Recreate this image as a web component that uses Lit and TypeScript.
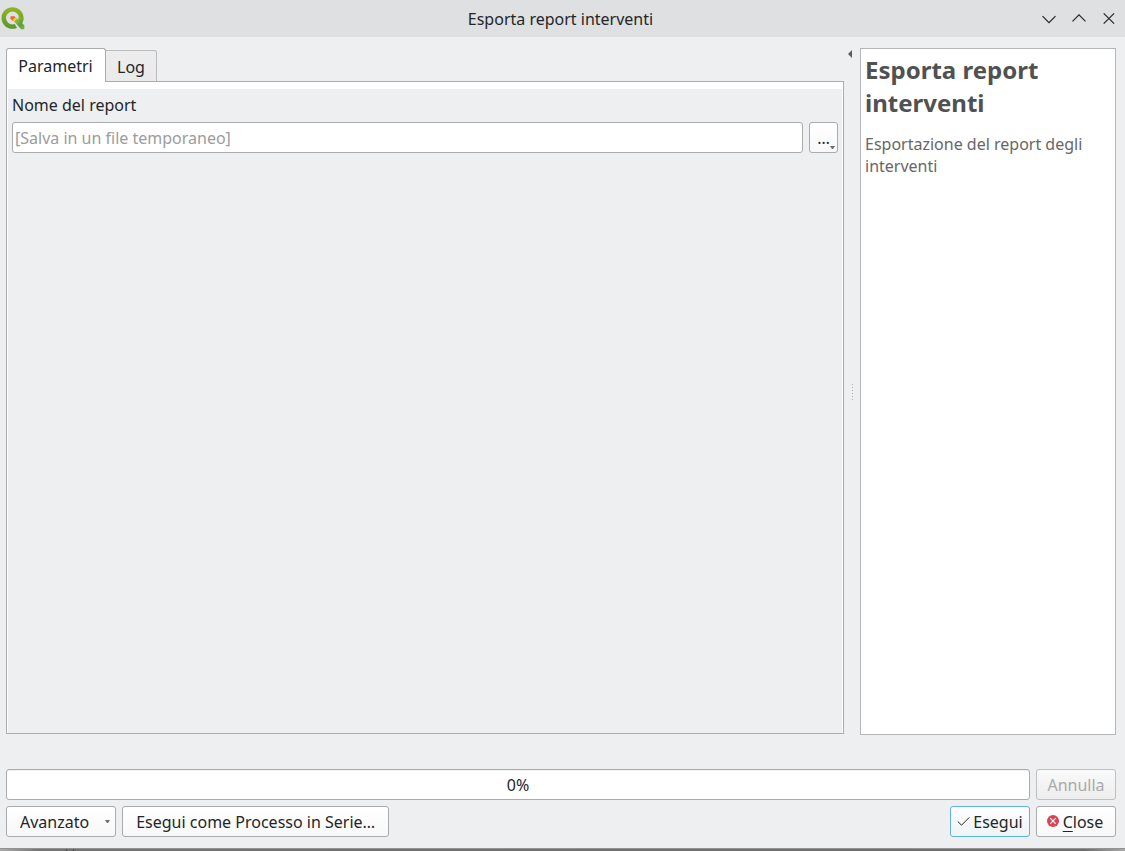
import { LitElement, html, css } from "lit";
import { customElement, property, state } from "lit/decorators.js";

@customElement("title-bar")
class TitleBar extends LitElement {
  @property() heading = "";

  static styles = css`
    :host {
      display: grid;
      grid-template-columns: 1fr auto 1fr;
      align-items: center;
      height: 37px;
      background: #dee0e2;
      color: #232629;
    }
    .logo {
      display: block;
      margin-left: 1px;
    }
    .heading {
      margin: 0;
      padding: 1px 4px 0 0;
      font-size: 16px;
      font-weight: 400;
      line-height: 22px;
    }
    .controls {
      display: flex;
      justify-content: flex-end;
      gap: 14px;
      padding: 0 8px 2px 0;
    }
    .control {
      display: block;
      width: 16px;
      height: 16px;
      padding: 0;
      border: 0;
      background: none;
    }
    .glyph {
      display: block;
      fill: none;
      stroke: #232629;
      stroke-width: 1.2;
    }
  `;

  render() {
    return html`
      <svg class="logo" width="24" height="26" viewBox="0 0 24 26" aria-hidden="true">
        <defs>
          <linearGradient id="ring" x1="0" y1="0" x2="0" y2="1">
            <stop offset="0" stop-color="#93b723" />
            <stop offset="1" stop-color="#589632" />
          </linearGradient>
          <linearGradient id="tail" x1="0" y1="0" x2="1" y2="1">
            <stop offset="0" stop-color="#a5cf4c" />
            <stop offset="0.6" stop-color="#5b9f3a" />
            <stop offset="1" stop-color="#7db547" />
          </linearGradient>
        </defs>
        <path fill="url(#ring)" fill-rule="evenodd"
          d="M11.500 1.200a11 10.800 0 1 0 0 21.600a11 10.800 0 1 0 0-21.600zM11.500 5.600a6.500 6.400 0 1 1 0 12.800a6.500 6.400 0 1 1 0-12.800z" />
        <path fill="#dee0e2" d="M12.500 15.500l4.500-4 6.500 6.500v6h-6.500z" />
        <path fill="url(#ring)" d="M17.600 10.500l4.900 1.500c0 2.500-.8 4.500-1.900 6l-3.200-3.500z" />
        <path fill="url(#tail)" d="M13 15.200l3-3 7.300 7v4h-3.200z" />
        <path fill="#f0682c" d="M9.500 10.200h4l2 1.800-3.200 3.200-2.800-2.200z" />
        <path fill="#f7c648" d="M11.400 14.300l3.300-3.300 1.300 1.200-3 3z" />
      </svg>
      <h1 class="heading">${this.heading}</h1>
      <div class="controls">
        <button class="control" aria-label="Riduci a icona">
          <svg class="glyph" width="16" height="16" viewBox="0 0 16 16"><path d="M1.500 6.200L8 12.700l6.500-6.500" /></svg>
        </button>
        <button class="control" aria-label="Massimizza">
          <svg class="glyph" width="16" height="16" viewBox="0 0 16 16"><path d="M1.500 11.300L8 4.800l6.500 6.500" /></svg>
        </button>
        <button class="control" aria-label="Chiudi">
          <svg class="glyph" width="16" height="16" viewBox="0 0 16 16"><path d="M2.700 3.300l10.400 10.400M13.100 3.300L2.700 13.700" /></svg>
        </button>
      </div>
    `;
  }
}

@customElement("app-root")
class AppRoot extends LitElement {
  @state() private tab = "params";
  @state() private output = "";

  static styles = css`
    :host {
      display: flex;
      flex-direction: column;
      min-height: 100vh;
      background: #eeeff1;
      color: #232629;
      font-family: "Noto Sans", sans-serif;
      font-size: 16px;
      line-height: 22px;
    }
    .body {
      flex: 1;
      display: grid;
      grid-template-columns: minmax(0, 1fr) 16px 256px;
      padding: 11px 9px 0 6px;
    }
    .main {
      display: flex;
      flex-direction: column;
      padding-bottom: 1px;
    }
    .tabs {
      display: flex;
      align-items: flex-end;
    }
    button,
    input {
      box-sizing: border-box;
      font: inherit;
      color: inherit;
    }
    .tab {
      height: 31px;
      padding: 1px 11px 0;
      border: 1px solid #b9bbbc;
      border-bottom: 0;
      border-left: 0;
      border-radius: 0 3px 0 0;
      background: linear-gradient(#ededed, #eaeaea);
    }
    .tab.active {
      z-index: 1;
      height: 34px;
      margin-bottom: -1px;
      padding: 0 12px 0 11px;
      min-width: 100px;
      border: 1px solid #a9abad;
      border-bottom: 0;
      border-radius: 3px 3px 0 0;
      background: #ffffff;
    }
    .pane {
      flex: 1;
      display: flex;
      padding: 7px 1px 0;
      border: 1px solid #a9abad;
      background: #ffffff;
    }
    .form {
      flex: 1;
      padding: 5px 4px;
      background: #eeeff1;
    }
    .label {
      display: block;
      margin-bottom: 6px;
    }
    .row {
      display: flex;
      gap: 6px;
    }
    .field {
      flex: 1;
      min-width: 0;
      height: 31px;
      padding: 0 2px;
      border: 1px solid #a9abad;
      border-radius: 3px;
      background: #ffffff;
    }
    .field::placeholder {
      color: #9b9c9d;
      opacity: 1;
    }
    .button {
      display: flex;
      align-items: center;
      justify-content: center;
      height: 31px;
      padding: 0 13px;
      border: 1px solid #a9abad;
      border-radius: 3px;
      background: linear-gradient(#ffffff, #f8f8f8);
      white-space: nowrap;
    }
    .browse {
      position: relative;
      width: 29px;
      padding: 0;
    }
    .browse-arrow {
      position: absolute;
      right: 2px;
      bottom: 3px;
    }
    .splitter {
      display: grid;
      grid-template-rows: 1fr auto 1fr;
      justify-items: center;
      padding-top: 2px;
      margin-top: -2px;
    }
    .collapse {
      width: 16px;
      height: 12px;
      padding: 0 4px 0 3px;
      border: 0;
      background: none;
    }
    .icon {
      display: block;
    }
    .help {
      padding: 4px;
      border: 1px solid #b4b6b8;
      background: #ffffff;
      color: #666768;
    }
    .help-title {
      margin: 0 0 14px;
      color: #505152;
      font-size: 24px;
      font-weight: 700;
      line-height: 33px;
    }
    .help-text {
      margin: 0;
    }
    .footer {
      display: grid;
      grid-template-columns: minmax(0, 1fr) 80px;
      gap: 6px;
      padding: 34px 9px 11px 6px;
    }
    .progress {
      display: flex;
      align-items: center;
      justify-content: center;
      box-sizing: border-box;
      height: 31px;
      border: 1px solid #a9abad;
      border-radius: 3px;
      background: #ffffff;
      box-shadow: inset 0 1px #f0f0f0;
    }
    .actions {
      display: flex;
      gap: 6px;
    }
    .advanced {
      gap: 16px;
      padding: 0 5px 0 13px;
    }
    .run {
      gap: 3px;
      width: 80px;
      margin-left: auto;
      padding: 0;
      border-color: #5fb3dd;
      background: linear-gradient(#ffffff, #edf3f7);
    }
    .cancel {
      padding: 0;
      border-color: #bfc0c1;
      background: linear-gradient(#fafafa, #ededee);
      color: #a9aaab;
    }
    .close {
      gap: 4px;
      padding: 0 2px 0 0;
    }
    .badge {
      display: block;
      margin-bottom: 2px;
    }
    .mnemonic {
      text-decoration: underline;
      text-decoration-thickness: 1px;
      text-underline-offset: 3px;
    }
    .edge {
      display: flex;
      gap: 6px;
      height: 2px;
      padding-left: 66px;
      border-top: 1px solid #929394;
      background: linear-gradient(90deg, #a9a9a9, #747474 40px, #6e6e6e calc(100% - 40px), #a9a9a9);
    }
    .notch {
      width: 1px;
      background: #444546;
    }
  `;

  private tabButton(id: string, text: string) {
    const active = this.tab === id;
    return html`<button
      class="tab ${active ? "active" : ""}"
      role="tab"
      aria-selected=${active ? "true" : "false"}
      @click=${() => (this.tab = id)}
    >${text}</button>`;
  }

  private form() {
    return html`
      <label class="label" for="report">Nome del report</label>
      <div class="row">
        <input
          class="field"
          id="report"
          type="text"
          placeholder="[Salva in un file temporaneo]"
          .value=${this.output}
          @input=${(e: Event) => (this.output = (e.target as HTMLInputElement).value)}
        />
        <button class="button browse" aria-label="Sfoglia">
          …
          <svg class="browse-arrow" width="5" height="3" viewBox="0 0 5 3"><path fill="#6b6d6f" d="M0 0h5L3 3H2z" /></svg>
        </button>
      </div>
    `;
  }

  render() {
    return html`
      <title-bar heading="Esporta report interventi"></title-bar>
      <div class="body">
        <section class="main">
          <div class="tabs" role="tablist">
            ${this.tabButton("params", "Parametri")}${this.tabButton("log", "Log")}
          </div>
          <div class="pane" role="tabpanel">
            <div class="form">${this.tab === "params" ? this.form() : ""}</div>
          </div>
        </section>
        <div class="splitter">
          <button class="collapse" aria-label="Nascondi la guida">
            <svg class="icon" width="9" height="12" viewBox="0 0 9 12"><path fill="#5b5d5f" d="M5 2v8L1 6z" /></svg>
          </button>
          <svg class="icon" width="1" height="16" viewBox="0 0 1 16">
            <path stroke="#b0b2b4" stroke-dasharray="1 2" d="M.5 0v16" />
          </svg>
        </div>
        <aside class="help">
          <h2 class="help-title">Esporta report interventi</h2>
          <p class="help-text">Esportazione del report degli interventi</p>
        </aside>
      </div>
      <footer class="footer">
        <div class="progress" role="progressbar" aria-label="Avanzamento" aria-valuemin="0" aria-valuemax="100" aria-valuenow="0">0%</div>
        <button class="button cancel" disabled>Annulla</button>
        <div class="actions">
          <button class="button advanced">
            Avanzato
            <svg class="icon" width="5" height="3" viewBox="0 0 5 3"><path fill="#6b6d6f" d="M0 0h5L3 3H2z" /></svg>
          </button>
          <button class="button">Esegui come Processo in Serie…</button>
          <button class="button run">
            <svg class="icon" width="13" height="12" viewBox="0 0 13 12"><path fill="none" stroke="#232629" stroke-width="1" d="M.8 5.500l3.700 3.700L12.300 1.400" /></svg>
            Esegui
          </button>
        </div>
        <button class="button close">
          <svg class="badge" width="12" height="12" viewBox="0 0 12 12">
            <circle cx="6" cy="6" r="6" fill="#da4453" />
            <path stroke="#ffffff" stroke-width="1.200" d="M3.200 3.200l5.600 5.600M8.800 3.200L3.200 8.800" />
          </svg>
          <span><span class="mnemonic">C</span>lose</span>
        </button>
      </footer>
      <div class="edge"><span class="notch"></span><span class="notch"></span></div>
    `;
  }
}
